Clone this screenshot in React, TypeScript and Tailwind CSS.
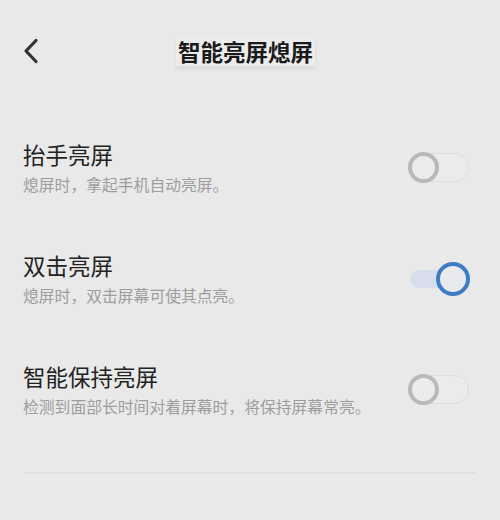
import React, { useState } from "react";

const font = { fontFamily: '"Noto Sans CJK SC", "Noto Sans", sans-serif' };

function Toggle({ on, onClick }: { on: boolean; onClick: () => void }) {
  if (on) {
    return (
      <button onClick={onClick} className="relative w-[62px] h-[34px] flex items-center">
        <span className="absolute left-[2px] right-[14px] h-[18px] rounded-full bg-[#d5deea]" />
        <span className="absolute right-0 w-[34px] h-[34px] rounded-full border-[4px] border-[#3f7cc6] bg-[#e8eaed]" />
      </button>
    );
  }
  return (
    <button onClick={onClick} className="relative w-[62px] h-[32px] flex items-center">
      <span className="absolute left-[2px] right-[1px] h-[29px] rounded-full border border-[#dddddd] bg-[#ebebeb]" />
      <span className="absolute left-0 w-[31px] h-[31px] rounded-full border-[4px] border-[#b9b9b9] bg-[#ececec]" />
    </button>
  );
}

const rows = [
  { title: "抬手亮屏", desc: "熄屏时，拿起手机自动亮屏。", on: false },
  { title: "双击亮屏", desc: "熄屏时，双击屏幕可使其点亮。", on: true },
  { title: "智能保持亮屏", desc: "检测到面部长时间对着屏幕时，将保持屏幕常亮。", on: false },
];

export default function App() {
  const [state, setState] = useState(rows.map((r) => r.on));
  return (
    <div className="w-[500px] h-[520px] bg-[#e9e9e9] overflow-hidden" style={font}>
      <header className="relative h-[112px] flex justify-center pt-[36px]">
        <svg className="absolute left-[22px] top-[38px]" width="18" height="26" viewBox="0 0 18 26" fill="none">
          <path d="M14 2.5 L4 13 L14 23.5" stroke="#333" strokeWidth="3.2" strokeLinecap="round" strokeLinejoin="round" />
        </svg>
        <h1 className="mr-[9px] h-[30px] px-[2px] text-[22.5px] leading-[30px] font-bold text-[#1a1a1a] bg-[#ececec] shadow-[0_3px_4px_rgba(0,0,0,0.07)]">
          智能亮屏熄屏
        </h1>
      </header>
      <div className="flex flex-col">
        {rows.map((r, i) => (
          <div key={r.title} className="h-[111px] flex items-center justify-between pl-[23px] pr-[30px]">
            <div className="flex flex-col gap-[7px]">
              <div className="text-[22.5px] leading-[28px] text-[#222222]">{r.title}</div>
              <div className="text-[15.8px] leading-[20px] text-[#9d9d9d]">{r.desc}</div>
            </div>
            <Toggle on={state[i]} onClick={() => setState(state.map((s, j) => (j === i ? !s : s)))} />
          </div>
        ))}
      </div>
      <div className="mx-[24px] mt-[27px] h-[2px] bg-[#e1e1e1]" />
    </div>
  );
}
